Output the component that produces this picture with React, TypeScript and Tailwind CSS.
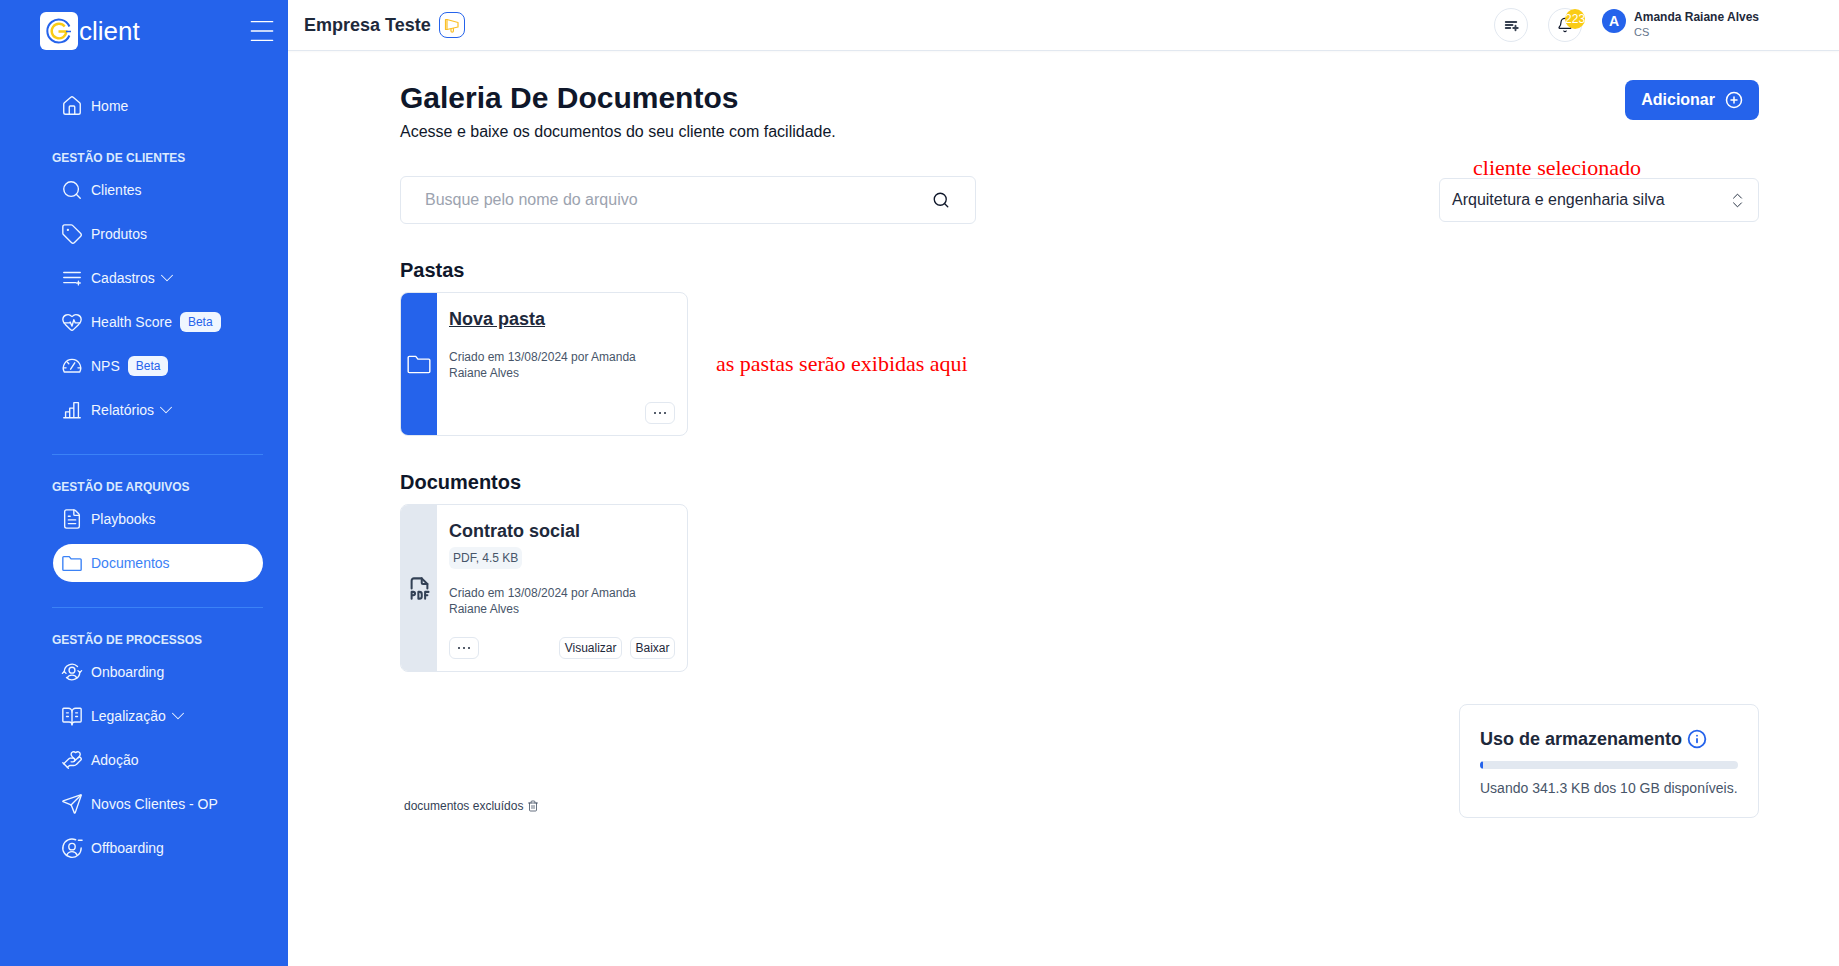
import React from 'react';
import {
  House, Search, Tag, HeartPulse, FileText, ChevronDown,
  BookOpenText, HandHeart, Send, Bell, CirclePlus, ChevronsUpDown, Info, Trash2, Menu,
} from 'lucide-react';
import { TbFileTypePdf, TbPlaylistAdd } from 'react-icons/tb';

function Glyph({ size = 24, sw = 1.500, children }: { size?: number; sw?: number; children: React.ReactNode }) {
  return (
    <svg width={size} height={size} viewBox="0 0 24 24" fill="none" stroke="currentColor" strokeWidth={sw} strokeLinecap="round" strokeLinejoin="round">
      {children}
    </svg>
  );
}

function OnboardingIcon() {
  return (
    <Glyph>
      <circle cx="12" cy="10" r="3.200" />
      <path d="M6.800 18.400c1-2 3-3 5.200-3s4.200 1 5.200 3" />
      <path d="M3.500 12a8.500 8.500 0 0 1 14.500-6" />
      <path d="M20.500 12a8.500 8.500 0 0 1-14.500 6" />
      <path d="M1.500 13.500 3.500 11.500 5.500 13.500" />
      <path d="M18.500 10.500 20.500 12.500 22.500 10.500" />
    </Glyph>
  );
}

function OffboardingIcon() {
  return (
    <Glyph size={22}>
      <circle cx="12" cy="10.500" r="3.500" />
      <path d="M6.500 19.500c1-2.200 3.200-3.500 5.500-3.500s4.500 1.300 5.500 3.500" />
      <path d="M16 3a10 10 0 1 0 6 9" />
      <path d="M19 3.500h4" />
    </Glyph>
  );
}

function FolderIcon({ size = 24, sw = 1.500 }: { size?: number; sw?: number }) {
  return (
    <Glyph size={size} sw={sw}>
      <path d="M2 6a1 1 0 0 1 1-1h6l2 2.500h10a1 1 0 0 1 1 1V19a1 1 0 0 1-1 1H3a1 1 0 0 1-1-1z" />
    </Glyph>
  );
}

function Logo() {
  return (
    <div className="flex items-center">
      <div className="w-[38px] h-[38px] rounded-md bg-white flex items-center justify-center">
        <svg width="28" height="28" viewBox="0 0 28 28" fill="none">
          {/* blue ring, open on the right where the G bar comes through */}
          <path d="M24.400 9.500A11.500 11.500 0 1 0 24.400 18.500" stroke="#2563eb" strokeWidth="2" />
          <path d="M19.700 9.500A7.300 7.300 0 1 0 21.300 14.500H13.500" stroke="#facc15" strokeWidth="2.400" />
          <path d="M21 14.500h5" stroke="#2563eb" strokeWidth="1.500" />
        </svg>
      </div>
      <span className="text-[26px] leading-none text-white ml-[1px]">client</span>
    </div>
  );
}

function NavItem({ icon, label, chevron, beta, active }: { icon: React.ReactNode; label: string; chevron?: boolean; beta?: boolean; active?: boolean }) {
  return (
    <div className={`h-[38px] w-[210px] ml-[1px] flex items-center pl-[8px] rounded-[19px] text-sm ${active ? 'bg-white text-[#3b82f6]' : 'text-[#eff6ff]'}`}>
      <span className="w-[22px] h-[22px] flex items-center justify-center shrink-0">{icon}</span>
      <span className="ml-[8px]">{label}</span>
      {chevron && <ChevronDown size={22} strokeWidth={1.100} className="ml-[1px]" />}
      {beta && <span className="ml-[8px] h-[20px] px-2 rounded-md bg-[#eff6ff] text-[#2563eb] text-xs flex items-center">Beta</span>}
    </div>
  );
}

function SectionLabel({ children }: { children: React.ReactNode }) {
  return <p className="text-xs font-bold text-[#dbeafe] leading-4 mb-[5px]">{children}</p>;
}

function Sidebar() {
  return (
    <aside className="w-[288px] shrink-0 min-h-[966px] bg-[#2563eb]">
      <div className="h-[50px] pt-[12px] pl-[40px] pr-[10px] flex items-start justify-between">
        <Logo />
        <Menu size={32} strokeWidth={1} className="text-white mt-[3px]" />
      </div>
      <nav className="pl-[52px] pr-[25px] pt-[37px]">
        <div className="flex flex-col">
          <NavItem icon={<House size={22} strokeWidth={1.500} />} label="Home" />
        </div>
        <div className="mt-[25px]">
          <SectionLabel>GESTÃO DE CLIENTES</SectionLabel>
          <div className="flex flex-col gap-[6px]">
            <NavItem icon={<Search size={24} strokeWidth={1.500} />} label="Clientes" />
            <NavItem icon={<Tag size={22} strokeWidth={1.500} />} label="Produtos" />
            <NavItem
              icon={
                <Glyph>
                  <path d="M3 6h18M3 11.500h18M3 17h13M19 15.500v4M17 17.500h4" />
                </Glyph>
              }
              label="Cadastros"
              chevron
            />
            <NavItem icon={<HeartPulse size={22} strokeWidth={1.500} />} label="Health Score" beta />
            <NavItem
              icon={
                <Glyph>
                  <path d="M3.500 18.500a9.500 9.500 0 1 1 17 0z" />
                  <path d="M10.500 15.500 15 8.500M3 14h2.500M18.500 14H21M7 8l1.500 1.500" />
                </Glyph>
              }
              label="NPS"
              beta
            />
            <NavItem
              icon={
                <Glyph>
                  <path d="M3 20.500h18M5 20.500V14h4.500v6.500M9.500 20.500V10H14v10.500M14 20.500V4h5v16.500" />
                </Glyph>
              }
              label="Relatórios"
              chevron
            />
          </div>
        </div>
        <div className="border-t border-[#3b82f6] mt-[25px] pt-[24px]">
          <SectionLabel>GESTÃO DE ARQUIVOS</SectionLabel>
          <div className="flex flex-col gap-[6px]">
            <NavItem icon={<FileText size={22} strokeWidth={1.500} />} label="Playbooks" />
            <NavItem icon={<FolderIcon size={22} />} label="Documentos" active />
          </div>
        </div>
        <div className="border-t border-[#3b82f6] mt-[25px] pt-[24px]">
          <SectionLabel>GESTÃO DE PROCESSOS</SectionLabel>
          <div className="flex flex-col gap-[6px]">
            <NavItem icon={<OnboardingIcon />} label="Onboarding" />
            <NavItem icon={<BookOpenText size={23} strokeWidth={1.500} />} label="Legalização" chevron />
            <NavItem icon={<HandHeart size={24} strokeWidth={1.500} />} label="Adoção" />
            <NavItem icon={<Send size={22} strokeWidth={1.500} />} label="Novos Clientes - OP" />
            <NavItem icon={<OffboardingIcon />} label="Offboarding" />
          </div>
        </div>
      </nav>
    </aside>
  );
}

function Header() {
  return (
    <header className="h-[51px] border-b border-[#e2e8f0] flex items-center pl-[16px] pr-[80px] shadow-[0_1px_2px_rgba(0,0,0,0.03)]">
      <span className="text-lg font-bold text-[#1e293b] leading-none">Empresa Teste</span>
      <span className="ml-[8px] w-[26px] h-[26px] rounded-lg border border-[#2563eb] flex items-center justify-center">
        <svg width="16" height="16" viewBox="0 0 16 16" fill="none" stroke="#fbbf24" strokeWidth="1.200" strokeLinejoin="round">
          <path d="M1.500 2.500H3L14 5.500V10L3 12.500H1.500Z" />
          <path d="M3 2.500V12.500" />
          <path d="M7 11.500V14a1.200 1.200 0 0 0 2.400 0V11" />
        </svg>
      </span>
      <div className="ml-auto flex items-center">
        <span className="w-[34px] h-[34px] rounded-full border border-[#e2e8f0] flex items-center justify-center text-[#374151]">
          <TbPlaylistAdd size={18} strokeWidth={2.500} />
        </span>
        <span className="relative ml-[20px] w-[34px] h-[34px] rounded-full border border-[#e2e8f0] flex items-center justify-center text-[#0f172a]">
          <Bell size={16} strokeWidth={1.800} />
          <span className="absolute top-0 left-[16px] w-[20px] h-[20px] rounded-full bg-[#facc15] text-white text-xs font-medium flex items-center justify-center">223</span>
        </span>
        <span className="ml-[20px] -mt-[8px] w-[24px] h-[24px] rounded-full bg-[#2563eb] text-white text-sm font-bold flex items-center justify-center">A</span>
        <div className="ml-[8px] -mt-[2px] flex flex-col">
          <span className="text-xs font-bold text-[#1e293b] leading-[16px]">Amanda Raiane Alves</span>
          <span className="text-[11px] text-[#64748b] leading-[14px]">CS</span>
        </div>
      </div>
    </header>
  );
}

function IconBtn() {
  return (
    <span className="w-[30px] h-[22px] rounded-md border border-[#e2e8f0] flex items-center justify-center gap-[3px]">
      <span className="w-[2px] h-[2px] rounded-full bg-[#1e293b]" />
      <span className="w-[2px] h-[2px] rounded-full bg-[#1e293b]" />
      <span className="w-[2px] h-[2px] rounded-full bg-[#1e293b]" />
    </span>
  );
}

function SmallBtn({ children }: { children: React.ReactNode }) {
  return <span className="h-[22px] px-[4.5px] rounded-md border border-[#e2e8f0] text-xs text-[#1e293b] flex items-center">{children}</span>;
}

function FolderCard() {
  return (
    <div className="w-[288px] h-[144px] rounded-lg border border-[#e2e8f0] flex overflow-hidden shrink-0">
      <div className="w-[36px] bg-[#2563eb] flex items-center justify-center text-white">
        <FolderIcon size={26} sw={1.300} />
      </div>
      <div className="flex-1 pl-[12px] pr-[12px] pt-[14px] pb-[11px] flex flex-col">
        <h4 className="text-lg leading-[24px] font-bold text-[#1e293b] underline">Nova pasta</h4>
        <p className="mt-[18px] text-xs leading-4 text-[#475569]">Criado em 13/08/2024 por Amanda Raiane Alves</p>
        <div className="mt-auto flex justify-end">
          <IconBtn />
        </div>
      </div>
    </div>
  );
}

function DocCard() {
  return (
    <div className="w-[288px] h-[168px] rounded-lg border border-[#e2e8f0] flex overflow-hidden">
      <div className="w-[36px] bg-[#e2e8f0] flex items-center justify-center text-[#334155]">
        <TbFileTypePdf size={27} strokeWidth={1.800} />
      </div>
      <div className="flex-1 pl-[12px] pr-[12px] pt-[14px] pb-[12px] flex flex-col">
        <h4 className="text-lg leading-[24px] font-bold text-[#1e293b]">Contrato social</h4>
        <span className="mt-[4px] self-start h-[22px] px-[4px] rounded-md bg-[#f1f5f9] text-xs text-[#475569] flex items-center">PDF, 4.5 KB</span>
        <p className="mt-[16px] text-xs leading-4 text-[#475569]">Criado em 13/08/2024 por Amanda Raiane Alves</p>
        <div className="mt-auto flex items-center">
          <IconBtn />
          <div className="ml-auto flex gap-2">
            <SmallBtn>Visualizar</SmallBtn>
            <SmallBtn>Baixar</SmallBtn>
          </div>
        </div>
      </div>
    </div>
  );
}

export default function App() {
  return (
    <div className="flex min-h-[966px] bg-white" style={{ fontFamily: '"Liberation Sans", Arial, sans-serif' }}>
      <Sidebar />
      <div className="flex-1 min-w-0">
        <Header />
        <main className="pl-[112px] pr-[80px] pt-[29px]">
          <div className="flex items-start justify-between">
            <div>
              <h1 className="text-3xl leading-[36px] font-bold text-[#0f172a]">Galeria De Documentos</h1>
              <p className="mt-[4px] text-base leading-6 text-[#0f172a]">Acesse e baixe os documentos do seu cliente com facilidade.</p>
            </div>
            <button className="h-[40px] px-4 rounded-lg bg-[#2563eb] text-white text-base font-bold flex items-center gap-[10px]">
              Adicionar
              <CirclePlus size={18} strokeWidth={2} />
            </button>
          </div>

          <div className="mt-[32px] flex items-center justify-between">
            <div className="w-[576px] h-[48px] rounded-md border border-[#e2e8f0] flex items-center pl-[24px] pr-[25px]">
              <span className="text-base text-[#9ca3af]">Busque pelo nome do arquivo</span>
              <Search size={18} strokeWidth={1.800} className="ml-auto text-[#0f172a]" />
            </div>
            <div className="relative w-[320px] h-[44px] rounded-md border border-[#e2e8f0] flex items-center pl-3 pr-[11px] text-base text-[#1e293b]">
              <span className="absolute -top-[25px] left-[33px] text-[22px] leading-7 text-[#ff0000] whitespace-nowrap" style={{ fontFamily: '"Liberation Serif", serif' }}>cliente selecionado</span>
              <span>Arquitetura e engenharia silva</span>
              <ChevronsUpDown size={19} strokeWidth={1.200} className="ml-auto" />
            </div>
          </div>

          <h2 className="mt-[32px] text-xl leading-7 font-semibold text-[#0f172a]">Pastas</h2>
          <div className="mt-[8px] flex items-center">
            <FolderCard />
            <span className="ml-[28px] text-[22px] leading-7 text-[#ff0000] whitespace-nowrap" style={{ fontFamily: '"Liberation Serif", serif' }}>as pastas serão exibidas aqui</span>
          </div>

          <h2 className="mt-[32px] text-xl leading-7 font-semibold text-[#0f172a]">Documentos</h2>
          <div className="mt-[8px]">
            <DocCard />
          </div>

          <div className="mt-[32px] flex items-end justify-between">
            <div className="mb-[4px] ml-[4px] flex items-center gap-[4px] text-xs leading-4 text-[#334155]">
              documentos excluídos
              <Trash2 size={12} strokeWidth={1.500} />
            </div>
            <div className="w-[300px] h-[114px] rounded-lg border border-[#e2e8f0] px-[20px] pt-[20px]">
              <div className="flex items-center gap-[5px]">
                <span className="text-lg leading-7 font-bold text-[#1e293b]">Uso de armazenamento</span>
                <Info size={20} strokeWidth={2.200} className="text-[#2563eb]" />
              </div>
              <div className="mt-[8px] h-[8px] rounded-full bg-[#e2e8f0] overflow-hidden">
                <div className="h-full rounded-full bg-[#2563eb]" style={{ width: '1%' }} />
              </div>
              <p className="mt-[9px] text-sm leading-5 text-[#475569] whitespace-nowrap">Usando 341.3 KB dos 10 GB disponíveis.</p>
            </div>
          </div>
        </main>
      </div>
    </div>
  );
}
